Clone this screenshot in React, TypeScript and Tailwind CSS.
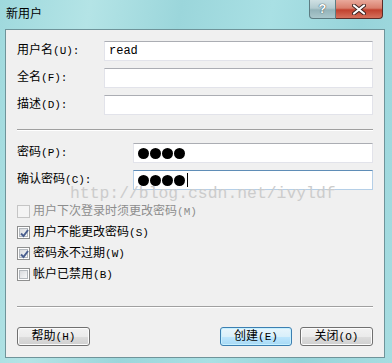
import React from "react";

const ui = "font-['Liberation_Mono','Noto_Sans_CJK_SC',monospace]";

function Label({ text, k }: { text: string; k: string }) {
  return (
    <span className="whitespace-nowrap text-[12px] leading-none text-black">
      {text}
      <span className="text-[11px]">({k}):</span>
    </span>
  );
}

function Field({ children, focused }: { children?: React.ReactNode; focused?: boolean }) {
  return (
    <div
      className={
        focused
          ? "flex h-[20px] flex-1 items-center border border-[#b5cfe7] border-t-[#5f8db7] bg-white pl-[4px]"
          : "flex h-[20px] flex-1 items-center border border-[#e2e3ea] border-t-[#abadb3] bg-white pl-[4px]"
      }
    >
      {children}
    </div>
  );
}

function Dots({ caret }: { caret?: boolean }) {
  return (
    <div className="flex items-center gap-[1px]">
      {[0, 1, 2, 3].map((i) => (
        <span key={i} className="h-[11px] w-[11px] rounded-full bg-black" />
      ))}
      {caret && <span className="ml-[1px] h-[14px] w-[1px] bg-black" />}
    </div>
  );
}

function Check({ checked, disabled }: { checked?: boolean; disabled?: boolean }) {
  return (
    <span
      className={
        disabled
          ? "flex h-[13px] w-[13px] shrink-0 items-center justify-center border border-[#c5c5c5] bg-[#f4f4f4]"
          : "flex h-[13px] w-[13px] shrink-0 items-center justify-center border border-[#8e8f8f] bg-white"
      }
    >
      <span
        className={
          disabled
            ? "relative flex h-[9px] w-[9px] items-center justify-center"
            : "relative flex h-[9px] w-[9px] items-center justify-center border border-[#b3b8bd] bg-[linear-gradient(135deg,#d9dbde,#f6f7f8)]"
        }
      >
        {checked && (
          <svg width="11" height="11" viewBox="0 0 11 11" className="absolute left-[-1px] top-[-1px]">
            <path d="M2 5.5 L4.5 8 L9 2" fill="none" stroke="#4a5f8f" strokeWidth="2" />
          </svg>
        )}
      </span>
    </span>
  );
}

function CheckRow({ label, k, checked, disabled }: { label: string; k: string; checked?: boolean; disabled?: boolean }) {
  return (
    <div className="flex h-[21px] items-center gap-[3px]">
      <Check checked={checked} disabled={disabled} />
      <span className={disabled ? "whitespace-nowrap text-[12px] leading-none text-[#8d8d8d]" : "whitespace-nowrap text-[12px] leading-none text-black"}>
        {label}
        <span className="text-[11px]">({k})</span>
      </span>
    </div>
  );
}

function Btn({ text, k, primary }: { text: string; k: string; primary?: boolean }) {
  return (
    <div
      className={
        primary
          ? "flex h-[19px] w-[72px] items-center justify-center rounded-[3px] border border-[#3c7fb1] bg-[linear-gradient(#e8f5fc_0%,#d9effa_50%,#bee6fd_51%,#a7d9f5_100%)] shadow-[inset_0_0_0_1px_#c6f0ff]"
          : "flex h-[19px] w-[73px] items-center justify-center rounded-[3px] border border-[#707070] bg-[linear-gradient(#f2f2f2_0%,#ebebeb_50%,#dddddd_51%,#cfcfcf_100%)] shadow-[inset_0_0_0_1px_#fcfcfc]"
      }
    >
      <span className="whitespace-nowrap text-[12px] leading-none text-black">
        {text}
        <span className="text-[11px]">({k})</span>
      </span>
    </div>
  );
}

export default function App() {
  return (
    <div
      className={`relative flex h-[363px] w-[392px] flex-col overflow-hidden bg-[linear-gradient(100deg,#9fd9dd_0%,#b4e4e6_20%,#9bd6db_40%,#a9e0e4_60%,#97d4da_80%,#a7dde1_100%)] text-[12px] leading-none ${ui}`}
    >
      <div className="flex h-[29px] shrink-0 items-start">
        <span className="mt-[8px] pl-[6px] text-[12px] leading-[14px] text-black">新用户</span>
        <div className="ml-auto mr-[9px] flex h-[19px]">
          <div className="flex w-[27px] items-center justify-center rounded-bl-[4px] border border-t-0 border-[#5d7c82] bg-[linear-gradient(#cfe0e3_0%,#b3cbd0_45%,#93b3b9_55%,#aac7cc_100%)]">
            <span className="text-[13px] font-bold leading-none text-white [text-shadow:0_0_1px_#2e4a50,0_0_1px_#2e4a50]">?</span>
          </div>
          <div className="flex w-[47px] items-center justify-center rounded-br-[4px] border border-l-0 border-t-0 border-[#5b2d28] bg-[linear-gradient(#e9a99b_0%,#d97f6d_45%,#c1412e_55%,#d5715c_100%)]">
            <svg width="14" height="11" viewBox="0 0 14 11">
              <path d="M2 1.5 L12 9.5 M12 1.5 L2 9.5" stroke="#3d2320" strokeWidth="4" strokeLinecap="round" />
              <path d="M2 1.5 L12 9.5 M12 1.5 L2 9.5" stroke="#ffffff" strokeWidth="2.2" strokeLinecap="round" />
            </svg>
          </div>
        </div>
      </div>

      <div className="ml-[5px] mr-[7px] flex h-[329px] flex-col border border-[#6f949a] bg-[#f0f0f0] px-[11px] pt-[11px]">
        <div className="flex flex-col gap-[7px]">
          <div className="flex items-center">
            <div className="w-[87px]">
              <Label text="用户名" k="U" />
            </div>
            <Field>
              <span className="text-[12px] leading-none text-black">read</span>
            </Field>
          </div>
          <div className="flex items-center">
            <div className="w-[87px]">
              <Label text="全名" k="F" />
            </div>
            <Field />
          </div>
          <div className="flex items-center">
            <div className="w-[87px]">
              <Label text="描述" k="D" />
            </div>
            <Field />
          </div>
        </div>

        <div className="mt-[14px] h-[2px] border-t border-b border-t-[#a0a0a0] border-b-white" />

        <div className="mt-[12px] flex flex-col gap-[7px]">
          <div className="flex items-center">
            <div className="w-[116px]">
              <Label text="密码" k="P" />
            </div>
            <Field>
              <Dots />
            </Field>
          </div>
          <div className="flex items-center">
            <div className="w-[116px]">
              <Label text="确认密码" k="C" />
            </div>
            <Field focused>
              <Dots caret />
            </Field>
          </div>
        </div>

        <div className="mt-[11px] flex flex-col">
          <CheckRow label="用户下次登录时须更改密码" k="M" disabled />
          <CheckRow label="用户不能更改密码" k="S" checked />
          <CheckRow label="密码永不过期" k="W" checked />
          <CheckRow label="帐户已禁用" k="B" />
        </div>

        <div className="mt-[21px] h-[2px] border-t border-b border-t-[#a0a0a0] border-b-white" />

        <div className="mt-[19px] flex items-center">
          <Btn text="帮助" k="H" />
          <div className="ml-auto flex gap-[8px]">
            <Btn text="创建" k="E" primary />
            <Btn text="关闭" k="O" />
          </div>
        </div>
      </div>

      <span className="pointer-events-none absolute left-[70px] top-[186px] whitespace-nowrap font-['Liberation_Mono',monospace] text-[16.4px] leading-none text-[#cccccc]">
        http://blog.csdn.net/ivyldf
      </span>
    </div>
  );
}
